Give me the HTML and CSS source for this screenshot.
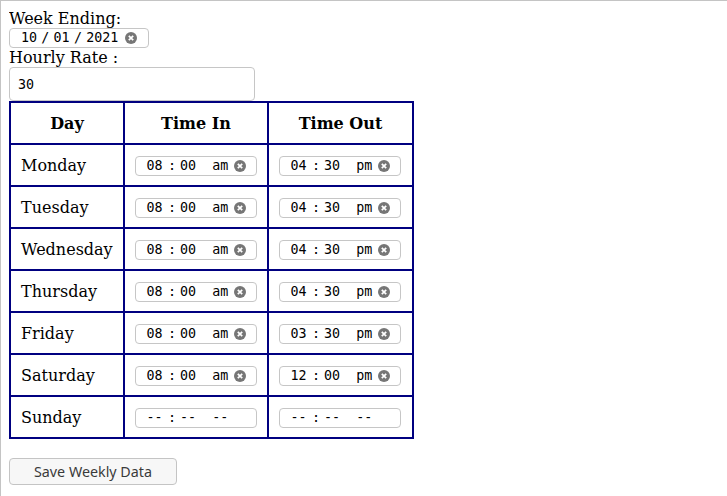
FILE: index.html
```html
<!DOCTYPE html>
<html>
<head>
<meta charset="utf-8">
<link rel="stylesheet" href="styles.css">
</head>
<body>
<div class="form">
  <div class="lbl">Week Ending:</div>
  <div class="row-field">
    <span class="dt date"><span class="f">10</span><span class="sep">/</span><span class="f">01</span><span class="sep">/</span><span class="f">2021</span><svg class="clr" width="12" height="12" viewBox="0 0 12 12"><circle cx="6" cy="6" r="6" fill="#767676"/><path d="M3.8 3.8l4.4 4.4M8.2 3.8l-4.4 4.4" stroke="#fff" stroke-width="1.7"/></svg></span>
  </div>
  <div class="lbl">Hourly Rate :</div>
  <div class="row-field"><span class="rate">30</span></div>
  <table class="hours">
    <tr><th class="c-day">Day</th><th class="c-in">Time In</th><th class="c-out">Time Out</th></tr>
    <tr><td>Monday</td>
      <td class="tc"><span class="dt time"><span class="f">08</span><span class="sep">:</span><span class="f">00</span><span class="ap">am</span><svg class="clr" width="12" height="12" viewBox="0 0 12 12"><circle cx="6" cy="6" r="6" fill="#767676"/><path d="M3.8 3.8l4.4 4.4M8.2 3.8l-4.4 4.4" stroke="#fff" stroke-width="1.7"/></svg></span></td>
      <td class="tc"><span class="dt time"><span class="f">04</span><span class="sep">:</span><span class="f">30</span><span class="ap">pm</span><svg class="clr" width="12" height="12" viewBox="0 0 12 12"><circle cx="6" cy="6" r="6" fill="#767676"/><path d="M3.8 3.8l4.4 4.4M8.2 3.8l-4.4 4.4" stroke="#fff" stroke-width="1.7"/></svg></span></td></tr>
    <tr><td>Tuesday</td>
      <td class="tc"><span class="dt time"><span class="f">08</span><span class="sep">:</span><span class="f">00</span><span class="ap">am</span><svg class="clr" width="12" height="12" viewBox="0 0 12 12"><circle cx="6" cy="6" r="6" fill="#767676"/><path d="M3.8 3.8l4.4 4.4M8.2 3.8l-4.4 4.4" stroke="#fff" stroke-width="1.7"/></svg></span></td>
      <td class="tc"><span class="dt time"><span class="f">04</span><span class="sep">:</span><span class="f">30</span><span class="ap">pm</span><svg class="clr" width="12" height="12" viewBox="0 0 12 12"><circle cx="6" cy="6" r="6" fill="#767676"/><path d="M3.8 3.8l4.4 4.4M8.2 3.8l-4.4 4.4" stroke="#fff" stroke-width="1.7"/></svg></span></td></tr>
    <tr><td>Wednesday</td>
      <td class="tc"><span class="dt time"><span class="f">08</span><span class="sep">:</span><span class="f">00</span><span class="ap">am</span><svg class="clr" width="12" height="12" viewBox="0 0 12 12"><circle cx="6" cy="6" r="6" fill="#767676"/><path d="M3.8 3.8l4.4 4.4M8.2 3.8l-4.4 4.4" stroke="#fff" stroke-width="1.7"/></svg></span></td>
      <td class="tc"><span class="dt time"><span class="f">04</span><span class="sep">:</span><span class="f">30</span><span class="ap">pm</span><svg class="clr" width="12" height="12" viewBox="0 0 12 12"><circle cx="6" cy="6" r="6" fill="#767676"/><path d="M3.8 3.8l4.4 4.4M8.2 3.8l-4.4 4.4" stroke="#fff" stroke-width="1.7"/></svg></span></td></tr>
    <tr><td>Thursday</td>
      <td class="tc"><span class="dt time"><span class="f">08</span><span class="sep">:</span><span class="f">00</span><span class="ap">am</span><svg class="clr" width="12" height="12" viewBox="0 0 12 12"><circle cx="6" cy="6" r="6" fill="#767676"/><path d="M3.8 3.8l4.4 4.4M8.2 3.8l-4.4 4.4" stroke="#fff" stroke-width="1.7"/></svg></span></td>
      <td class="tc"><span class="dt time"><span class="f">04</span><span class="sep">:</span><span class="f">30</span><span class="ap">pm</span><svg class="clr" width="12" height="12" viewBox="0 0 12 12"><circle cx="6" cy="6" r="6" fill="#767676"/><path d="M3.8 3.8l4.4 4.4M8.2 3.8l-4.4 4.4" stroke="#fff" stroke-width="1.7"/></svg></span></td></tr>
    <tr><td>Friday</td>
      <td class="tc"><span class="dt time"><span class="f">08</span><span class="sep">:</span><span class="f">00</span><span class="ap">am</span><svg class="clr" width="12" height="12" viewBox="0 0 12 12"><circle cx="6" cy="6" r="6" fill="#767676"/><path d="M3.8 3.8l4.4 4.4M8.2 3.8l-4.4 4.4" stroke="#fff" stroke-width="1.7"/></svg></span></td>
      <td class="tc"><span class="dt time"><span class="f">03</span><span class="sep">:</span><span class="f">30</span><span class="ap">pm</span><svg class="clr" width="12" height="12" viewBox="0 0 12 12"><circle cx="6" cy="6" r="6" fill="#767676"/><path d="M3.8 3.8l4.4 4.4M8.2 3.8l-4.4 4.4" stroke="#fff" stroke-width="1.7"/></svg></span></td></tr>
    <tr><td>Saturday</td>
      <td class="tc"><span class="dt time"><span class="f">08</span><span class="sep">:</span><span class="f">00</span><span class="ap">am</span><svg class="clr" width="12" height="12" viewBox="0 0 12 12"><circle cx="6" cy="6" r="6" fill="#767676"/><path d="M3.8 3.8l4.4 4.4M8.2 3.8l-4.4 4.4" stroke="#fff" stroke-width="1.7"/></svg></span></td>
      <td class="tc"><span class="dt time"><span class="f">12</span><span class="sep">:</span><span class="f">00</span><span class="ap">pm</span><svg class="clr" width="12" height="12" viewBox="0 0 12 12"><circle cx="6" cy="6" r="6" fill="#767676"/><path d="M3.8 3.8l4.4 4.4M8.2 3.8l-4.4 4.4" stroke="#fff" stroke-width="1.7"/></svg></span></td></tr>
    <tr><td>Sunday</td>
      <td class="tc"><span class="dt time"><span class="f">--</span><span class="sep">:</span><span class="f">--</span><span class="ap">--</span></span></td>
      <td class="tc"><span class="dt time"><span class="f">--</span><span class="sep">:</span><span class="f">--</span><span class="ap">--</span></span></td></tr>
  </table>
  <button class="save">Save Weekly Data</button>
</div>
</body>
</html>
```
FILE: styles.css
```css
html {
  border-top: 1px solid #c4c4c4;
  border-left: 1px solid #c4c4c4;
  min-height: 100%;
  box-sizing: border-box;
}
body {
  margin: 8px 8px 8px 8px;
  font-family: "DejaVu Serif", serif;
  font-size: 16px;
  color: #000;
}
.lbl {
  line-height: 19px;
  height: 19px;
}
.row-field {
  display: flex;
}
.dt {
  display: inline-flex;
  align-items: center;
  box-sizing: border-box;
  border: 1px solid #c6c6c6;
  border-radius: 4px;
  background: #fff;
  font-family: "DejaVu Sans Mono", monospace;
  font-size: 13.33px;
  line-height: 16px;
  color: #000;
  white-space: pre;
}
.date {
  width: 140px;
  height: 20px;
  padding-left: 11px;
}
.date .sep {
  margin: 0 4.25px;
}
.date .clr {
  margin-left: 7px;
}
.time {
  width: 122px;
  height: 20px;
  padding-left: 10.5px;
}
.time .sep {
  margin: 0 4px 0 5.5px;
}
.time .ap {
  margin-left: 16px;
}
.time .clr {
  margin-left: 5.5px;
}
.clr {
  flex: none;
  display: block;
}
.rate {
  display: flex;
  align-items: center;
  box-sizing: border-box;
  width: 246px;
  height: 34px;
  padding-left: 8px;
  border: 1px solid #c6c6c6;
  border-radius: 4px;
  font-family: "DejaVu Sans Mono", monospace;
  font-size: 13.33px;
}
.hours {
  border-collapse: collapse;
  border: 2px solid #000080;
}
.hours th, .hours td {
  border: 2px solid #000080;
  padding: 0 10px;
  height: 40px;
  text-align: left;
}
.hours th {
  text-align: center;
  font-weight: bold;
}
.hours td.tc {
  padding: 0 9px 0 10px;
}
.c-day { width: 92px; }
.c-in { width: 122px; }
.c-out { width: 123px; }
.save {
  display: block;
  margin-top: 19px;
  box-sizing: border-box;
  width: 168px;
  height: 27px;
  padding: 0;
  border: 1px solid #c4c4c4;
  border-radius: 4px;
  background: #f7f7f7;
  color: #3a3a3a;
  font-family: "Noto Sans", sans-serif;
  font-size: 14.3px;
}
```
